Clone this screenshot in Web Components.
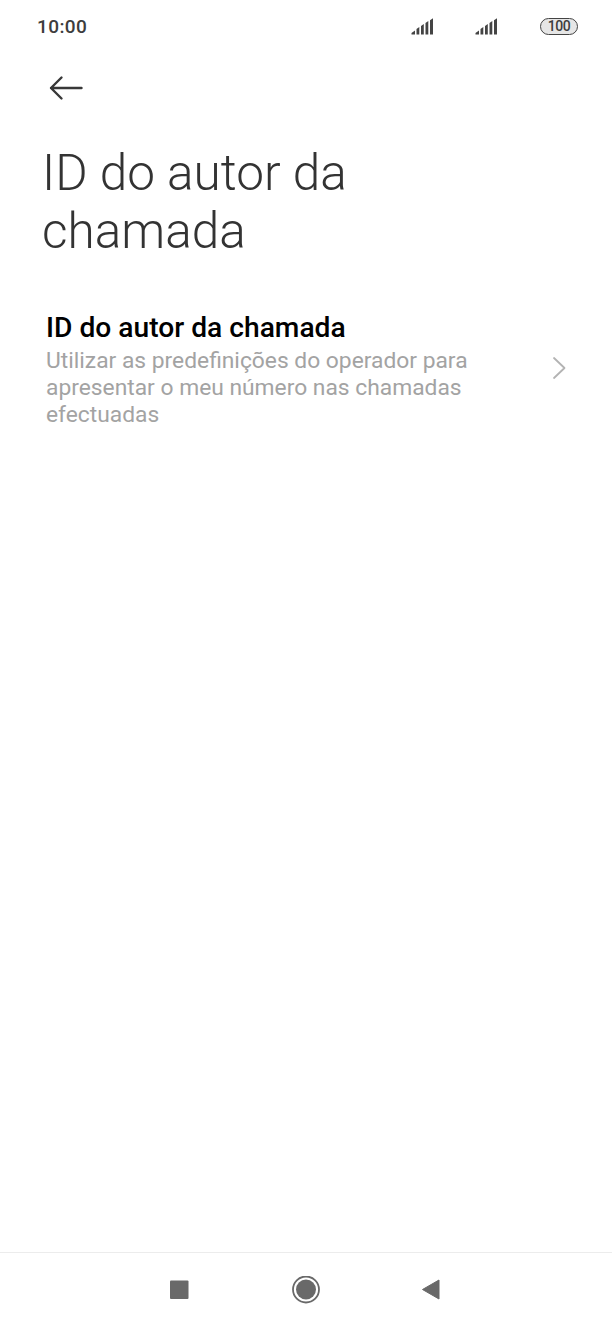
<!DOCTYPE html>
<html lang="pt">
<head>
<meta charset="utf-8">
<title>ID do autor da chamada</title>
<style>
    html, body {
        margin: 0;
        height: 100%;
        background: #fff;
    }
    body {
        font-family: Roboto, "Noto Sans", sans-serif;
    }
</style>
</head>
<body>
<settings-screen>
    <status-bar slot="status" time="10:00" level="100"></status-bar>
    <back-header slot="header">ID do autor da chamada</back-header>
    <setting-row title="ID do autor da chamada">Utilizar as predefinições do operador para apresentar o meu número nas chamadas efectuadas</setting-row>
    <nav-bar slot="nav"></nav-bar>
</settings-screen>

<script>
class SettingsScreen extends HTMLElement {
    constructor() {
        super();
        this.attachShadow({ mode: "open" });
        this.shadowRoot.innerHTML = `
            <style>
                :host {
                    display: flex;
                    flex-direction: column;
                    width: 612px;
                    height: 1326px;
                    background: #fff;
                }
                main { flex: 1; }
            </style>
            <slot name="status"></slot>
            <slot name="header"></slot>
            <main><slot></slot></main>
            <slot name="nav"></slot>
        `;
    }
}

class StatusBar extends HTMLElement {
    constructor() {
        super();
        this.attachShadow({ mode: "open" });
        const signal = `
            <svg width="24" height="17" viewBox="0 0 24 17" fill="#444">
                <path d="M0.5 16.5v-1.5L4 12.5v4z"/>
                <path d="M5.5 16.5V11L8.3 9v7.5z"/>
                <path d="M10 16.5V8l2.8-2v10.5z"/>
                <path d="M14.5 16.5V5l2.8-2v13.5z"/>
                <path d="M19 16.5V2.2l3-2v16.3z"/>
            </svg>`;
        this.shadowRoot.innerHTML = `
            <style>
                :host {
                    display: flex;
                    align-items: center;
                    height: 53px;
                    padding: 0 34px 0 37px;
                    color: #3d3d3d;
                }
                .time {
                    font: 500 19px Roboto, sans-serif;
                    letter-spacing: 0.4px;
                    flex: 1;
                }
                .signal { display: flex; margin-right: 40px; }
                .signal:nth-of-type(3) { margin-right: 41px; }
                .signal svg { display: block; }
                .battery {
                    box-sizing: border-box;
                    width: 38px;
                    height: 17px;
                    border: 1.5px solid #444;
                    border-radius: 8.5px;
                    background: #e6e6e6;
                    font: 500 14px/14px Roboto, sans-serif;
                    letter-spacing: -0.4px;
                    text-align: center;
                }
            </style>
            <span class="time">${this.getAttribute("time")}</span>
            <span class="signal">${signal}</span>
            <span class="signal">${signal}</span>
            <span class="battery">${this.getAttribute("level")}</span>
        `;
    }
}

class BackHeader extends HTMLElement {
    constructor() {
        super();
        this.attachShadow({ mode: "open" });
        this.shadowRoot.innerHTML = `
            <style>
                :host {
                    display: block;
                    padding: 0 42px;
                }
                svg { display: block; margin: 22px 0 0 7px; }
                h1 {
                    margin: 43px 0 0;
                    width: 340px;
                    font: 300 49.5px/58px Roboto, sans-serif;
                    color: #333;
                }
            </style>
            <svg width="34" height="26" viewBox="0 0 34 26" fill="none" stroke="#383838" stroke-width="2.4" stroke-linecap="round" stroke-linejoin="round">
                <path d="M32.5 13H2M12.5 2.5 2 13l10.5 10.5"/>
            </svg>
            <h1><slot></slot></h1>
        `;
    }
}

class SettingRow extends HTMLElement {
    constructor() {
        super();
        this.attachShadow({ mode: "open" });
        this.shadowRoot.innerHTML = `
            <style>
                :host {
                    display: flex;
                    align-items: center;
                    padding: 48px 45px 0 46px;
                }
                .text { width: 460px; }
                .title {
                    font: 500 28.2px/39px Roboto, sans-serif;
                    color: #000;
                }
                .desc {
                    font: 400 22.8px/27px Roboto, sans-serif;
                    color: #a3a3a3;
                }
                svg { margin-left: auto; display: block; }
            </style>
            <div class="text">
                <div class="title">${this.getAttribute("title")}</div>
                <div class="desc"><slot></slot></div>
            </div>
            <svg width="16" height="24" viewBox="0 0 16 24" fill="none" stroke="#b3b3b3" stroke-width="1.8" stroke-linecap="round" stroke-linejoin="round">
                <path d="M3 2l10.5 10L3 22"/>
            </svg>
        `;
    }
}

class NavBar extends HTMLElement {
    constructor() {
        super();
        this.attachShadow({ mode: "open" });
        this.shadowRoot.innerHTML = `
            <style>
                :host {
                    display: flex;
                    align-items: center;
                    justify-content: center;
                    gap: 99px;
                    height: 73px;
                    border-top: 1px solid #ececec;
                    padding-right: 1px;
                }
                svg { display: block; }
            </style>
            <svg width="28" height="28" viewBox="0 0 28 28" fill="#696969">
                <rect x="5" y="4.5" width="18.5" height="18.5" rx="1"/>
            </svg>
            <svg width="28" height="28" viewBox="0 0 28 28">
                <circle cx="14" cy="13.5" r="13" fill="none" stroke="#696969" stroke-width="1.8"/>
                <circle cx="14" cy="13.5" r="10" fill="#696969"/>
            </svg>
            <svg width="28" height="28" viewBox="0 0 28 28" fill="#696969" stroke="#696969" stroke-width="1" stroke-linejoin="round">
                <path d="M3.5 13.5 20 4v19z"/>
            </svg>
        `;
    }
}

customElements.define("settings-screen", SettingsScreen);
customElements.define("status-bar", StatusBar);
customElements.define("back-header", BackHeader);
customElements.define("setting-row", SettingRow);
customElements.define("nav-bar", NavBar);
</script>
</body>
</html>
